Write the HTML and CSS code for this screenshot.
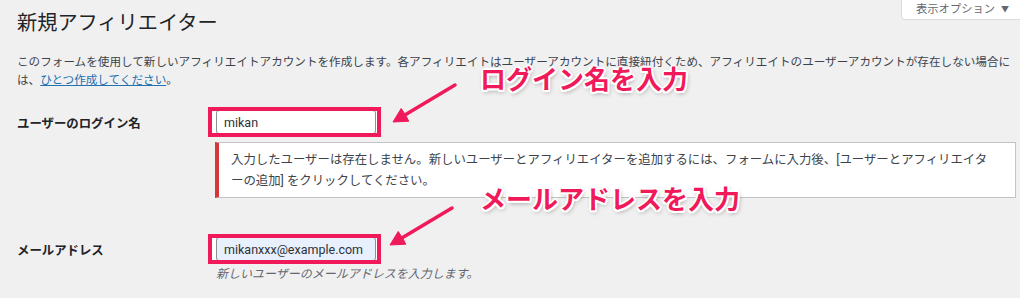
FILE: index.html
```html
<!DOCTYPE html>
<html lang="ja">
<head>
<meta charset="utf-8">
<title>新規アフィリエイター</title>
<link rel="stylesheet" href="styles.css">
</head>
<body>
<div class="page">
  <div class="header">
    <h1 class="title">新規アフィリエイター</h1>
    <button class="screen-options" type="button">表示オプション <span class="caret">▼</span></button>
  </div>
  <div class="content">
    <p class="intro">このフォームを使用して新しいアフィリエイトアカウントを作成します。各アフィリエイトはユーザーアカウントに直接紐付くため、アフィリエイトのユーザーアカウントが存在しない場合に<br>は、<a href="#" class="link">ひとつ作成してください</a>。</p>
    <div class="form-grid">
      <label class="label" for="user">ユーザーのログイン名</label>
      <div class="cell">
        <span class="field"><input id="user" class="input" type="text" value="mikan"></span>
        <div class="notice">入力したユーザーは存在しません。新しいユーザーとアフィリエイターを追加するには、フォームに入力後、[ユーザーとアフィリエイタ<br>ーの追加] をクリックしてください。</div>
      </div>
      <label class="label label-email" for="email">メールアドレス</label>
      <div class="cell cell-email">
        <span class="field"><input id="email" class="input input-autofill" type="text" value="mikanxxx@example.com"></span>
        <p class="hint">新しいユーザーのメールアドレスを入力します。</p>
      </div>
    </div>
  </div>
  <div class="annotations">
    <svg class="arrows" width="1020" height="298" viewBox="0 0 1020 298">
      <line x1="455" y1="85" x2="404" y2="115.5" class="shaft"/>
      <polygon points="393,122 408.8,121.2 405.5,115 401.2,108.5" class="head"/>
      <line x1="452" y1="208" x2="401" y2="238.5" class="shaft"/>
      <polygon points="390,245 405.8,244.2 402.5,238 398.2,231.5" class="head"/>
    </svg>
    <div class="callout callout-login">ログイン名を入力</div>
    <div class="callout callout-email">メールアドレスを入力</div>
  </div>
</div>
</body>
</html>
```

FILE: styles.css
```css
html, body {
  margin: 0;
  padding: 0;
  background: #f0f0f1;
  overflow: hidden;
}

body {
  font-family: Roboto, "Noto Sans CJK JP", sans-serif;
  color: #3c434a;
  width: 1020px;
  height: 298px;
}

.page {
  position: relative;
  width: 1020px;
  height: 298px;
}

.header {
  display: flex;
  justify-content: space-between;
  align-items: flex-start;
}

.title {
  margin: 0 0 0 17px;
  padding-top: 9px;
  font-size: 20.2px;
  line-height: 28px;
  font-weight: 400;
  color: #1d2327;
}

.screen-options {
  width: 119px;
  height: 20px;
  margin: 0;
  padding: 0 0 0 14px;
  border: 1px solid #dcdcde;
  border-top: none;
  border-right: none;
  border-radius: 0 0 0 4px;
  background: #fff;
  color: #646970;
  font-family: Roboto, "Noto Sans CJK JP", sans-serif;
  font-size: 11.3px;
  line-height: 18px;
  text-align: left;
}

.caret {
  font-size: 8px;
  margin-left: 3px;
  vertical-align: 1px;
}

.content {
  padding: 0 4px 0 17px;
}

.intro {
  margin: 16px 0 0;
  font-size: 11.6px;
  line-height: 18px;
  white-space: nowrap;
}

.link {
  color: #2271b1;
  text-decoration: underline;
}

.form-grid {
  display: grid;
  grid-template-columns: 199px 1fr;
  margin-top: 21px;
  row-gap: 39px;
}

.label {
  font-size: 12.4px;
  font-weight: 700;
  line-height: 24px;
  padding-top: 2px;
  color: #1d2327;
}

.cell {
  display: flex;
  flex-direction: column;
  align-items: flex-start;
}

.field {
  position: relative;
  display: inline-flex;
  margin-left: -4px;
  padding: 0 1px 0 4px;
  background: #fff;
}

.field::after {
  content: "";
  position: absolute;
  top: -3px;
  bottom: -3px;
  left: -4px;
  right: -4px;
  border: 4px solid #f0195a;
  pointer-events: none;
}

.input {
  box-sizing: border-box;
  width: 160px;
  height: 24px;
  margin: 0;
  padding: 0 7px;
  border: 1px solid #8c8f94;
  border-radius: 3px;
  background: #fff;
  color: #2c3338;
  font-family: Roboto, "Noto Sans CJK JP", sans-serif;
  font-size: 12.5px;
  outline: none;
}

.input-autofill {
  background: #e8f0fe;
}

.notice {
  align-self: stretch;
  margin: 8px 0 0 -1px;
  padding: 6px 12px;
  background: #fff;
  border: 1px solid #c3c4c7;
  border-left: 4px solid #d63638;
  font-size: 12.4px;
  line-height: 21px;
  white-space: nowrap;
  color: #3c434a;
}

.hint {
  margin: 4px 0 0;
  font-size: 12px;
  line-height: 18px;
  font-style: italic;
  color: #646970;
}

.annotations {
  position: absolute;
  top: 0;
  left: 0;
  width: 1020px;
  height: 298px;
  pointer-events: none;
}

.arrows {
  position: absolute;
  top: 0;
  left: 0;
}

.shaft {
  stroke: #f0195a;
  stroke-width: 3.5;
  stroke-linecap: round;
}

.head {
  fill: #f0195a;
  stroke: #f0195a;
  stroke-width: 1;
  stroke-linejoin: round;
}

.callout {
  position: absolute;
  font-family: "Noto Sans CJK JP", sans-serif;
  font-size: 26px;
  font-weight: 700;
  line-height: 30px;
  color: #f0195a;
  white-space: nowrap;
  text-shadow:
    2px 0 #fff, -2px 0 #fff, 0 2px #fff, 0 -2px #fff,
    1.5px 1.5px #fff, -1.5px 1.5px #fff, 1.5px -1.5px #fff, -1.5px -1.5px #fff,
    1px 2px 5px rgba(0, 0, 0, 0.45);
}

.callout-login {
  left: 480px;
  top: 63px;
}

.callout-email {
  left: 480px;
  top: 183px;
}
```
